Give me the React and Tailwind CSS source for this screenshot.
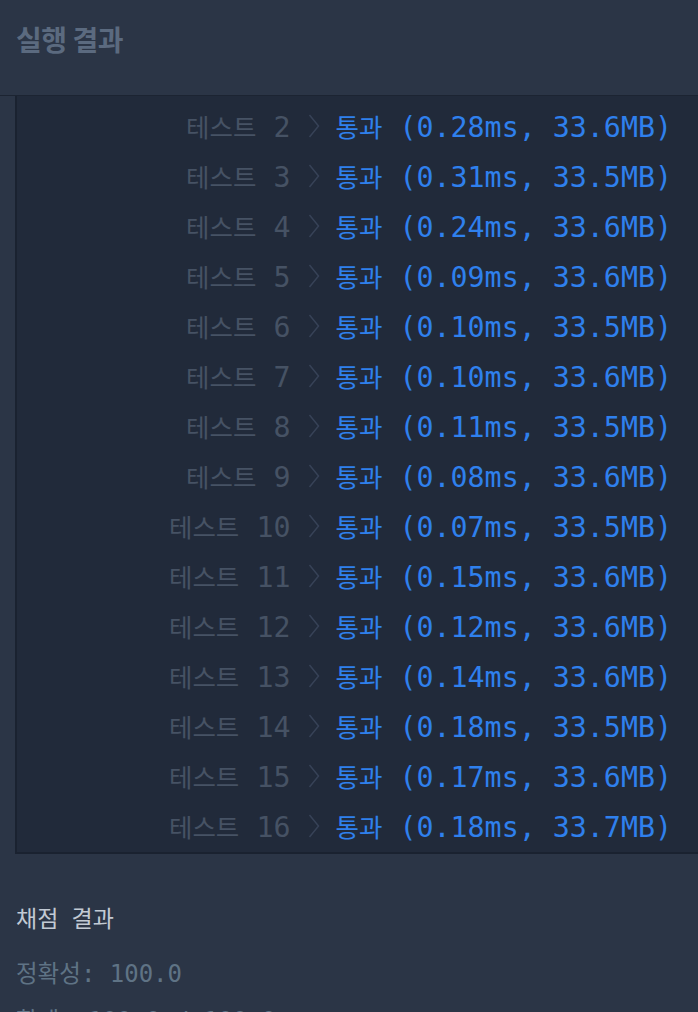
const KO = "font-['Noto_Sans_CJK_KR','Noto_Sans',sans-serif]";
const MONO = "font-['DejaVu_Sans_Mono','Liberation_Mono',monospace]";

// test results shown in the scroll box (test 1 is scrolled out of view)
const results = [
  [2, "0.28", "33.6"],
  [3, "0.31", "33.5"],
  [4, "0.24", "33.6"],
  [5, "0.09", "33.6"],
  [6, "0.10", "33.5"],
  [7, "0.10", "33.6"],
  [8, "0.11", "33.5"],
  [9, "0.08", "33.6"],
  [10, "0.07", "33.5"],
  [11, "0.15", "33.6"],
  [12, "0.12", "33.6"],
  [13, "0.14", "33.6"],
  [14, "0.18", "33.5"],
  [15, "0.17", "33.6"],
  [16, "0.18", "33.7"],
];

function Chevron() {
  return (
    <svg
      width="12"
      height="24"
      viewBox="0 0 12 24"
      className="self-center ml-[18px] mr-[15px] mb-[6px]"
      fill="none"
    >
      <path d="M1.5 1 L10.5 12 L1.5 23" stroke="#374257" strokeWidth="1.5" />
    </svg>
  );
}

function ResultRow({ no, time, mem }) {
  return (
    <div className="flex justify-end items-baseline h-[50px] pt-[6px] pr-[26px]">
      <span className={`${KO} text-[25.5px] text-[#465264]`}>테스트</span>
      <span className={`${MONO} text-[28.3px] text-[#465264] whitespace-pre`}>
        {" " + String(no)}
      </span>
      <Chevron />
      <span className={`${KO} text-[25.5px] text-[#2f80ed]`}>통과</span>
      <span className={`${MONO} text-[28.3px] text-[#2f80ed] whitespace-pre`}>
        {` (${time}ms, ${mem}MB)`}
      </span>
    </div>
  );
}

export default function App() {
  return (
    <div className="w-[698px] h-[1012px] overflow-hidden bg-[#2b3546]">
      {/* Header */}
      <div className="h-[96px] pt-[18px] px-4 border-b border-[#1c2432]">
        <h2 className={`${KO} text-[28px] font-bold text-[#5b6a7f] tracking-[-0.5px]`}>
          실행 결과
        </h2>
      </div>

      {/* Result box */}
      <div className="ml-[15px] bg-[#212a3a] border-l-2 border-b-2 border-[#1a2230] pt-[5px] pb-[1px]">
        {results.map(([no, time, mem]) => (
          <ResultRow key={no} no={no} time={time} mem={mem} />
        ))}
      </div>

      {/* Grading */}
      <div className="px-4 pt-[46px]">
        <h3 className="flex items-baseline text-[#c2cad4]">
          <span className={`${KO} text-[23px]`}>채점</span>
          <span className={`${MONO} text-[22px] whitespace-pre`}> </span>
          <span className={`${KO} text-[23px]`}>결과</span>
        </h3>
        <div className="mt-[19px] flex items-baseline text-[#5f7385]">
          <span className={`${KO} text-[23.5px]`}>정확성</span>
          <span className={`${MONO} text-[24px] whitespace-pre`}>: 100.0</span>
        </div>
        <div className="mt-[10px] flex items-baseline text-[#5f7385]">
          <span className={`${KO} text-[23.5px]`}>합계</span>
          <span className={`${MONO} text-[24px] whitespace-pre`}>: 100.0 / 100.0</span>
        </div>
      </div>
    </div>
  );
}
